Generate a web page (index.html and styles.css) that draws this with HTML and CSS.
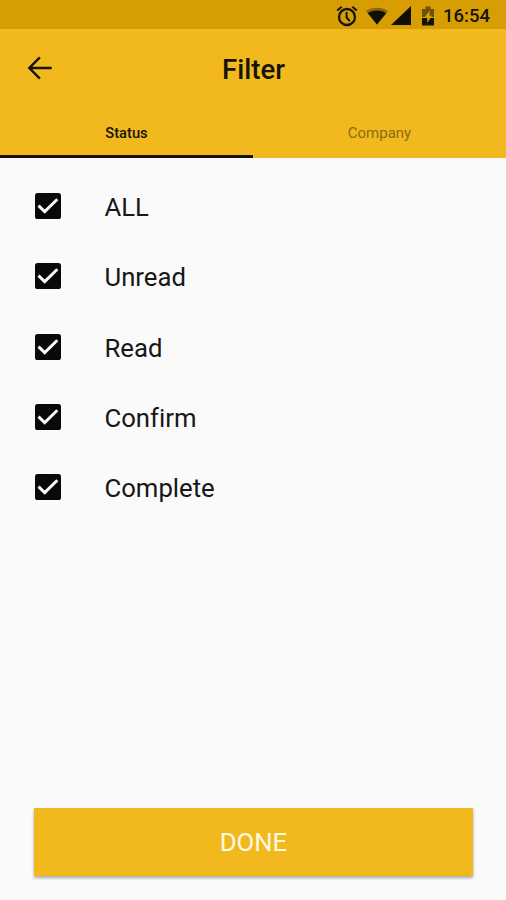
FILE: index.html
```html
<!DOCTYPE html>
<html lang="en">
<head>
<meta charset="utf-8">
<title>Filter</title>
<link rel="stylesheet" href="styles.css">
</head>
<body>
<div class="screen">
  <div class="status-bar">
    <svg class="alarm" viewBox="0 0 22 22"><circle cx="11" cy="12" r="8" fill="none" stroke="#171304" stroke-width="2.3"/><path d="M1.2 5.6 5.7 1.8M20.8 5.6 16.3 1.8M10.6 7v5.5l3.2 3.6" fill="none" stroke="#171304" stroke-width="2"/></svg>
    <svg class="wifi" viewBox="0 0 22 18"><path d="M0 4C6-.5 16-.5 22 4L11 17.5z" fill="#8d6905"/><path d="M1.8 6.2C7 2.6 15 2.6 20.2 6.2L11 17.5z" fill="#110e03"/></svg>
    <svg class="signal" viewBox="0 0 20 19"><path d="M0 19 20 0v19z" fill="#110e03"/></svg>
    <svg class="battery" viewBox="0 0 12 20"><path d="M0 3h3.5V.5h5V3H12v8H0z" fill="#6b5005"/><path d="M0 12h12v7.5H0z" fill="#171304"/><path d="M7.6 4.5 2.2 12h3v5l4.8-7.2H7.6z" fill="#d69e03"/></svg>
    <span class="clock">16:54</span>
  </div>
  <header class="app-bar">
    <svg class="back" viewBox="0 0 24 24"><path d="M19.8 12H5M11.9 4.9 4.9 12l7 7.1" fill="none" stroke="#171304" stroke-width="1.65"/></svg>
    <h1 class="title">Filter</h1>
  </header>
  <nav class="tabs">
    <div class="tab active">Status</div>
    <div class="tab">Company</div>
  </nav>
  <main class="options">
    <div class="option"><svg class="check" viewBox="0 0 26 26"><rect width="26" height="26" rx="2.6"/><path d="m3.5 12.6 6.2 6L22.3 6.2"/></svg><span>ALL</span></div>
    <div class="option"><svg class="check" viewBox="0 0 26 26"><rect width="26" height="26" rx="2.6"/><path d="m3.5 12.6 6.2 6L22.3 6.2"/></svg><span>Unread</span></div>
    <div class="option"><svg class="check" viewBox="0 0 26 26"><rect width="26" height="26" rx="2.6"/><path d="m3.5 12.6 6.2 6L22.3 6.2"/></svg><span>Read</span></div>
    <div class="option"><svg class="check" viewBox="0 0 26 26"><rect width="26" height="26" rx="2.6"/><path d="m3.5 12.6 6.2 6L22.3 6.2"/></svg><span>Confirm</span></div>
    <div class="option"><svg class="check" viewBox="0 0 26 26"><rect width="26" height="26" rx="2.6"/><path d="m3.5 12.6 6.2 6L22.3 6.2"/></svg><span>Complete</span></div>
  </main>
  <button class="done">DONE</button>
</div>
</body>
</html>
```
FILE: styles.css
```css
* { box-sizing: border-box; }
body { margin: 0; font-family: Roboto, sans-serif; color: #171717; background: #fafafa; }
.screen { height: 900px; display: flex; flex-direction: column; overflow: hidden; }
svg { display: block; flex: none; }
.status-bar { height: 29px; flex: none; background: #d69e03; display: flex; align-items: center; justify-content: flex-end; padding: 2px 15px 0 0; color: #171304; }
.alarm { width: 22px; height: 22px; margin-right: 8px; }
.wifi { width: 22px; height: 18px; margin-right: 3px; }
.signal { width: 20px; height: 19px; margin-right: 11px; }
.battery { width: 12px; height: 20px; margin-right: 9px; }
.clock { font-size: 18.5px; font-weight: 500; line-height: 22px; width: 48px; white-space: nowrap; padding-top: 1px; }
.app-bar { height: 80px; flex: none; background: #f1b91e; display: grid; grid-template-columns: 80px 1fr 80px; align-items: center; color: #171304; }
.back { width: 36px; height: 36px; margin: -2px 0 0 22px; }
.title { margin: 1px 0 0 1px; font-size: 27.5px; line-height: 32px; font-weight: 500; text-align: center; }
.tabs { height: 48.5px; flex: none; background: #f1b91e; display: flex; }
.tab { flex: 1; text-align: center; font-size: 15px; line-height: 49px; color: #8c6912; }
.tab.active { color: #171304; font-weight: 500; font-size: 14.7px; border-bottom: 3px solid #171304; }
.options { flex: 1; padding-top: 13.5px; }
.option { height: 70.3px; display: flex; align-items: center; padding-left: 35px; font-size: 25.7px; line-height: 32px; font-variant-ligatures: none; }
.option span { margin: 2px 0 0 43.5px; }
.check { width: 26px; height: 26px; }
.check rect { fill: #090909; }
.check path { fill: none; stroke: #fafafa; stroke-width: 2.9; }
.done { height: 68px; flex: none; margin: 0 33px 24px 34px; padding: 0; border: 0; background: #f1b91e; box-shadow: 0 2px 3px rgba(0,0,0,.33); color: #fff9e2; font: 25.7px/32px Roboto, sans-serif; }
```
